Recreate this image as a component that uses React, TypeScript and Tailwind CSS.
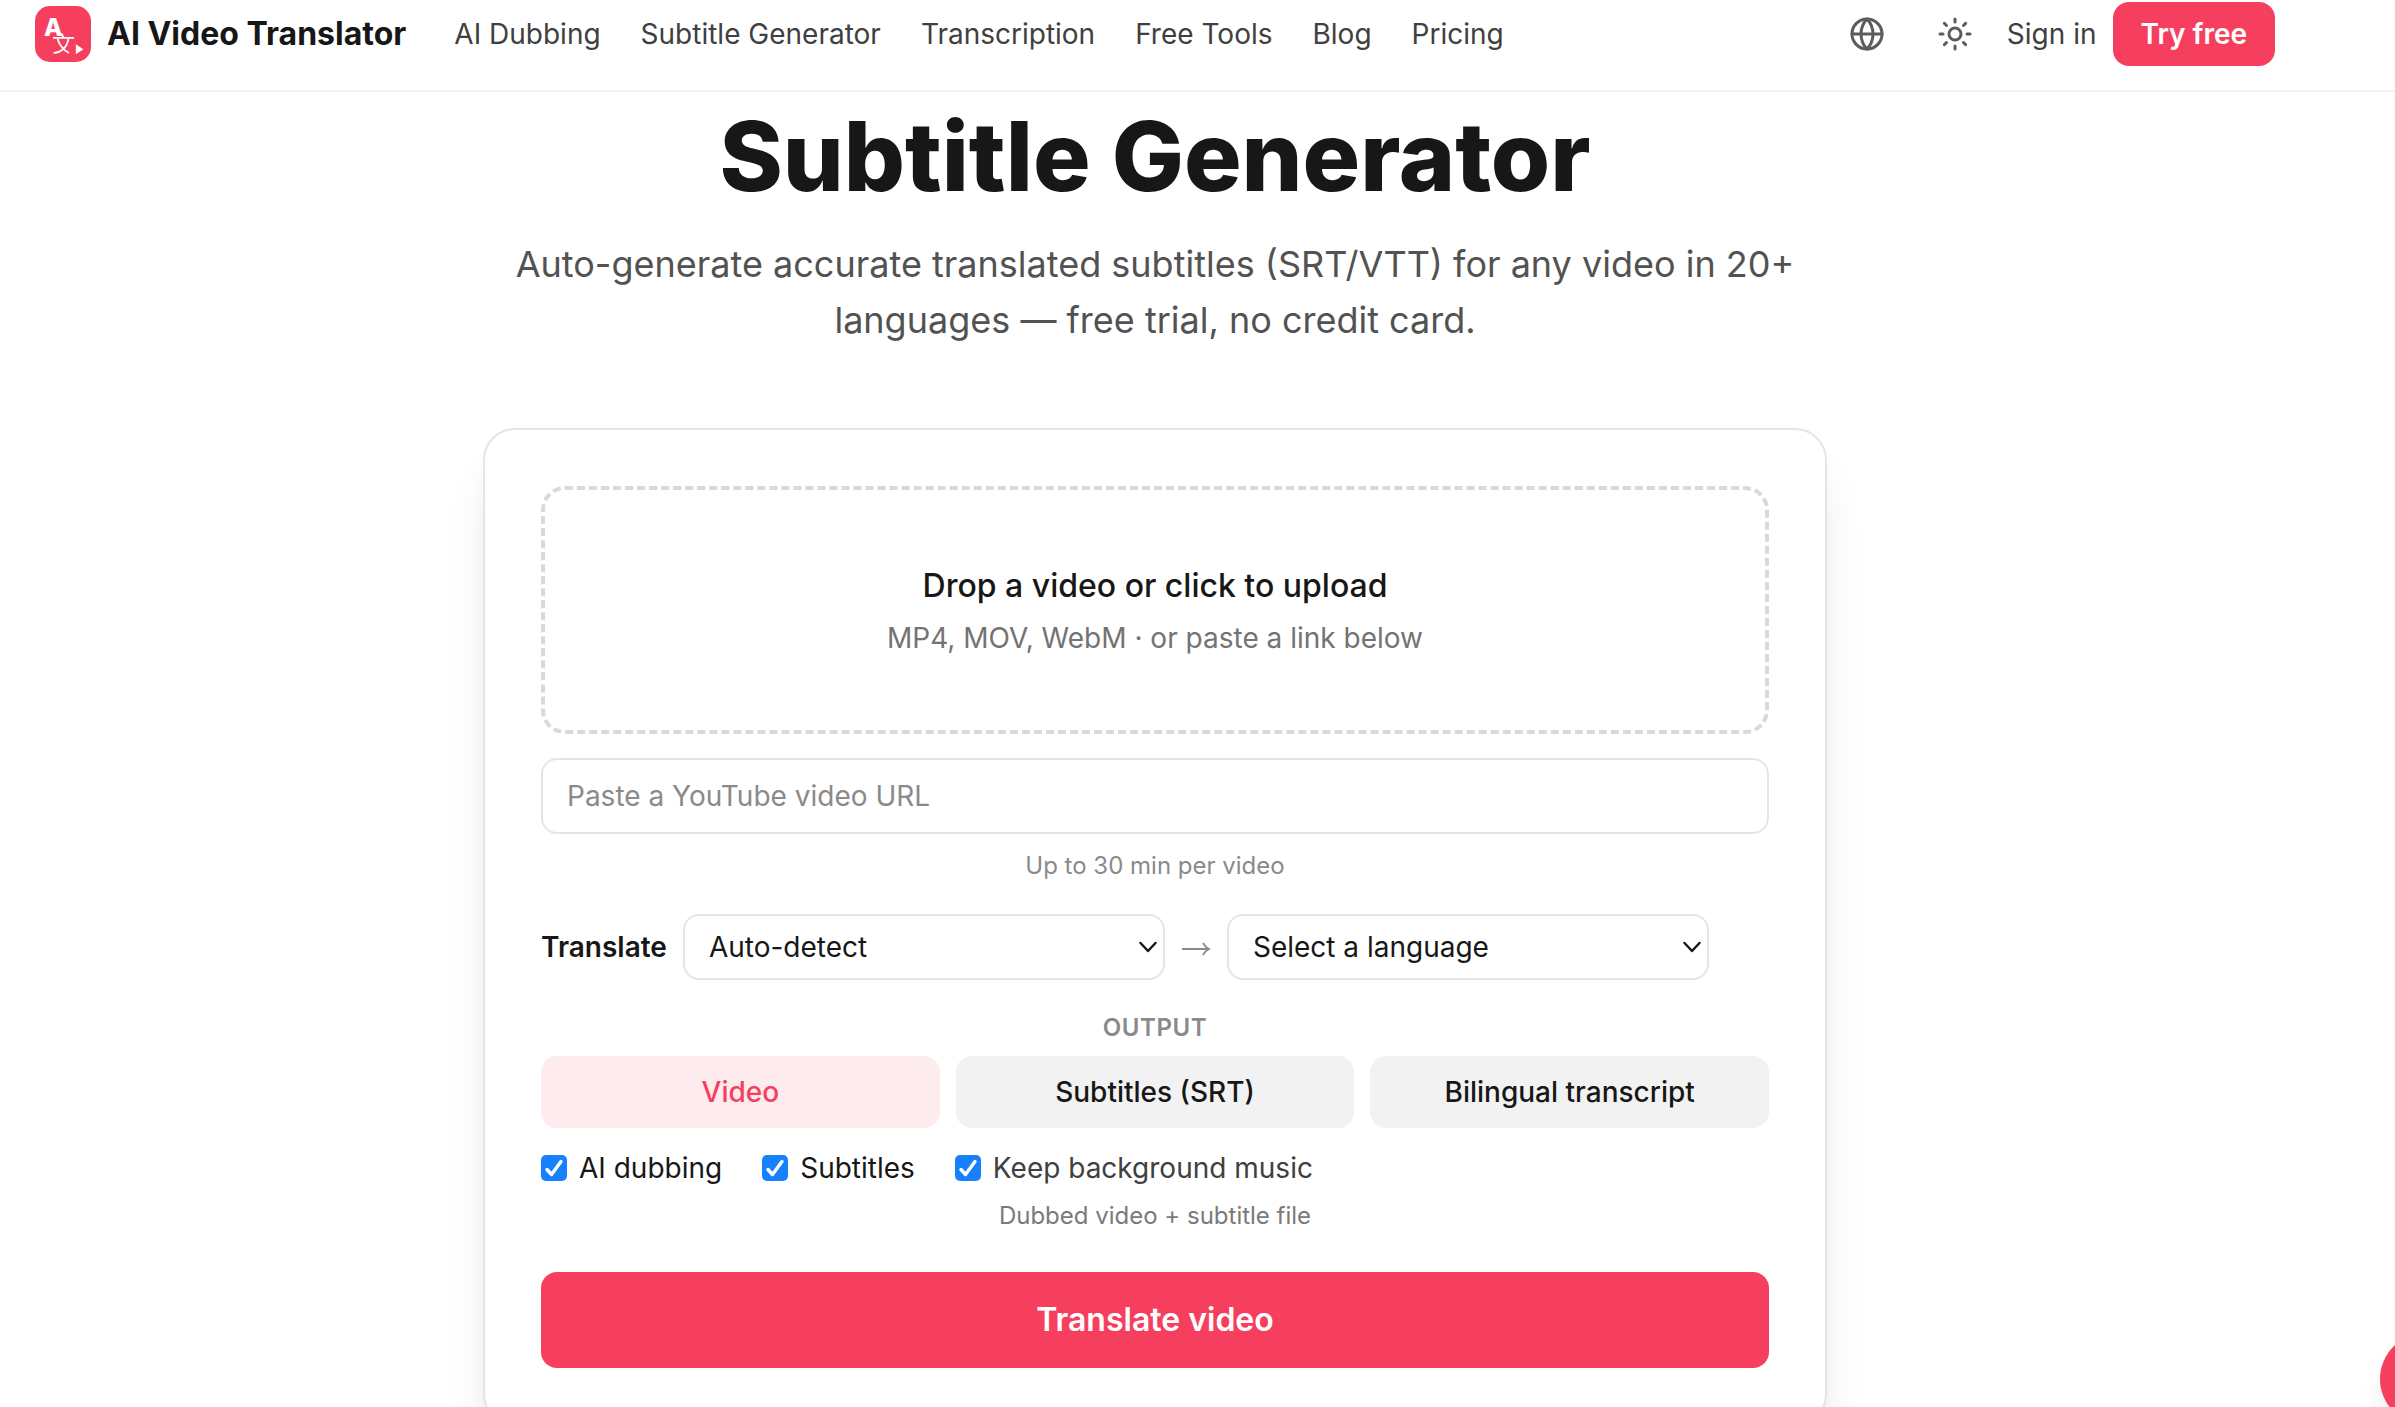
import React from "react";
import { Globe, Sun } from "lucide-react";

const navLinks = ["AI Dubbing", "Subtitle Generator", "Transcription", "Free Tools", "Blog", "Pricing"];

function Logo() {
  return (
    <svg viewBox="0 0 56 56" className="size-14 shrink-0" aria-hidden="true">
      <rect width="56" height="56" rx="15" fill="#f63f5e" />
      <text x="9" y="30" fontSize="24" fontWeight="800" fill="#fff" fontFamily="Inter, sans-serif">A</text>
      <g fill="none" stroke="#fff" strokeWidth="1.7">
        <path d="M26.5 27.5l2 4M18 31.8h21" />
        <path d="M22.5 32.5q2.5 9.500 11.500 14.500M33.500 32.500q-2 13-15 14.500" />
      </g>
      <path d="M40.800 38.300v10l7.500-5z" fill="#fff" />
    </svg>
  );
}

function Header() {
  return (
    <header className="border-b-2 border-[#f2f2f2] pt-0.5 pb-6">
      <div className="mr-[85px] flex items-center px-[35px]">
        <a href="#" className="flex items-center gap-4">
          <Logo />
          <span className="text-[32px] leading-10 font-bold whitespace-nowrap">AI Video Translator</span>
        </a>
        <nav className="ml-12 flex items-center gap-10 text-[28px] leading-10 whitespace-nowrap text-[#404040]">
          {navLinks.map((label) => (
            <a key={label} href="#">{label}</a>
          ))}
        </nav>
        <div className="ml-auto flex items-center gap-4 text-[28px] leading-10 whitespace-nowrap text-[#404040]">
          <button type="button" aria-label="Language" className="grid h-16 w-[72px] place-items-center text-[#5c5c5c]">
            <Globe className="size-9" />
          </button>
          <button type="button" aria-label="Toggle theme" className="grid h-16 w-[72px] place-items-center text-[#5c5c5c]">
            <Sun className="size-9" />
          </button>
          <a href="#">Sign in</a>
          <a href="#" className="rounded-2xl bg-[#f63f5e] px-7 py-3 font-semibold text-white">Try free</a>
        </div>
      </div>
    </header>
  );
}

function LanguageSelect({ label, first, options }: { label: string; first: string; options: string[] }) {
  return (
    <div className="relative w-[482px]">
      <select
        aria-label={label}
        className="h-[66px] w-full appearance-none rounded-2xl border-2 border-[#e5e5e5] bg-white pr-12 pl-6 text-[28px] leading-10"
      >
        <option>{first}</option>
        {options.map((o) => (
          <option key={o}>{o}</option>
        ))}
      </select>
      <svg
        viewBox="0 0 18 12"
        className="pointer-events-none absolute top-1/2 right-2 h-3 w-[18px] -translate-y-1/2"
        fill="none"
        stroke="currentColor"
        strokeWidth="2.4"
        strokeLinecap="round"
        strokeLinejoin="round"
        aria-hidden="true"
      >
        <path d="M1.5 2 9 10l7.5-8" />
      </svg>
    </div>
  );
}

function Check({ label, className = "" }: { label: string; className?: string }) {
  return (
    <label className={`flex items-center gap-3 ${className}`}>
      <span className="relative size-[26px]">
        <input type="checkbox" defaultChecked className="peer block size-[26px] appearance-none rounded-[5px] border-2 border-[#999] checked:border-0 checked:bg-[#1780ff]" />
        <svg
          viewBox="0 0 26 26"
          className="pointer-events-none absolute inset-0 hidden size-[26px] peer-checked:block"
          fill="none"
          stroke="#fff"
          strokeWidth="3.4"
          strokeLinecap="round"
          strokeLinejoin="round"
          aria-hidden="true"
        >
          <path d="m6 14.5 4.5 5L20 6.5" />
        </svg>
      </span>
      {label}
    </label>
  );
}

function OutputButton({ label, selected = false }: { label: string; selected?: boolean }) {
  return (
    <button
      type="button"
      aria-pressed={selected}
      className={`h-[72px] rounded-2xl text-[28px] leading-10 font-medium ${selected ? "bg-[#feebed] text-[#f63f5e]" : "bg-[#f2f2f2]"}`}
    >
      {label}
    </button>
  );
}

export default function App() {
  return (
    <div className="h-screen overflow-hidden bg-white font-['Inter',sans-serif] text-[#171717]">
      <Header />
      <main className="mr-[85px] flex flex-col items-center">
        <h1 className="mt-4 text-center text-[96px] leading-[96px] font-extrabold">Subtitle Generator</h1>
        <p className="mt-8 max-w-[1344px] text-center text-[36px] leading-[56px] text-[#525252]">
          Auto-generate accurate translated subtitles (SRT/VTT) for any video in 20+ languages — free trial, no credit card.
        </p>
        <form className="mt-20 flex w-full max-w-[1344px] flex-col rounded-[32px] border-2 border-[#e5e5e5] bg-white p-14 shadow-[0_40px_50px_-10px_rgba(0,0,0,0.1),0_16px_20px_-12px_rgba(0,0,0,0.1)]">
          <button type="button" className="flex flex-col items-center gap-2 rounded-3xl border-4 border-dashed border-[#d9d9d9] py-[72px]">
            <span className="text-[32px] leading-[48px] font-medium">Drop a video or click to upload</span>
            <span className="text-[28px] leading-10 text-[#737373]">MP4, MOV, WebM · or paste a link below</span>
          </button>
          <input
            type="url"
            aria-label="Video URL"
            placeholder="Paste a YouTube video URL"
            className="mt-6 h-[76px] rounded-2xl border-2 border-[#e5e5e5] px-6 text-[28px] leading-10 placeholder:text-[#8a8a8a]"
          />
          <p className="mt-4 text-center text-[24px] leading-8 text-[#8a8a8a]">Up to 30 min per video</p>
          <div className="mt-8 flex items-center gap-4">
            <span className="text-[28px] leading-10 font-semibold">Translate</span>
            <LanguageSelect label="Source language" first="Auto-detect" options={["English", "Spanish"]} />
            <svg viewBox="0 0 30 20" className="h-5 w-[30px] text-[#8a8a8a]" fill="none" stroke="currentColor" strokeWidth="1.8" aria-hidden="true">
              <path d="M1 12h27M22 6q2 4 6 6-4 2-6 6" />
            </svg>
            <LanguageSelect label="Target language" first="Select a language" options={["English", "Spanish"]} />
          </div>
          <p className="mt-8 text-center text-[24px] leading-8 font-semibold tracking-wide text-[#8a8a8a] uppercase">Output</p>
          <div className="mt-3 grid grid-cols-3 gap-4">
            <OutputButton label="Video" selected />
            <OutputButton label="Subtitles (SRT)" />
            <OutputButton label="Bilingual transcript" />
          </div>
          <div className="mt-5 flex gap-10 text-[28px] leading-10">
            <Check label="AI dubbing" />
            <Check label="Subtitles" />
            <Check label="Keep background music" className="text-[#404040]" />
          </div>
          <p className="mt-3 text-center text-[24px] leading-8 text-[#7a7a7a]">Dubbed video + subtitle file</p>
          <button type="submit" className="mt-10 h-24 rounded-2xl bg-[#f63f5e] text-[32px] leading-[48px] font-semibold text-white">
            Translate video
          </button>
        </form>
      </main>
      <button
        type="button"
        aria-label="Open chat"
        className="fixed -right-[77px] -bottom-[18px] size-[92px] rounded-full bg-[#f63f5e] shadow-[0_20px_30px_-6px_rgba(0,0,0,0.1),0_8px_12px_-8px_rgba(0,0,0,0.1)]"
      />
    </div>
  );
}
